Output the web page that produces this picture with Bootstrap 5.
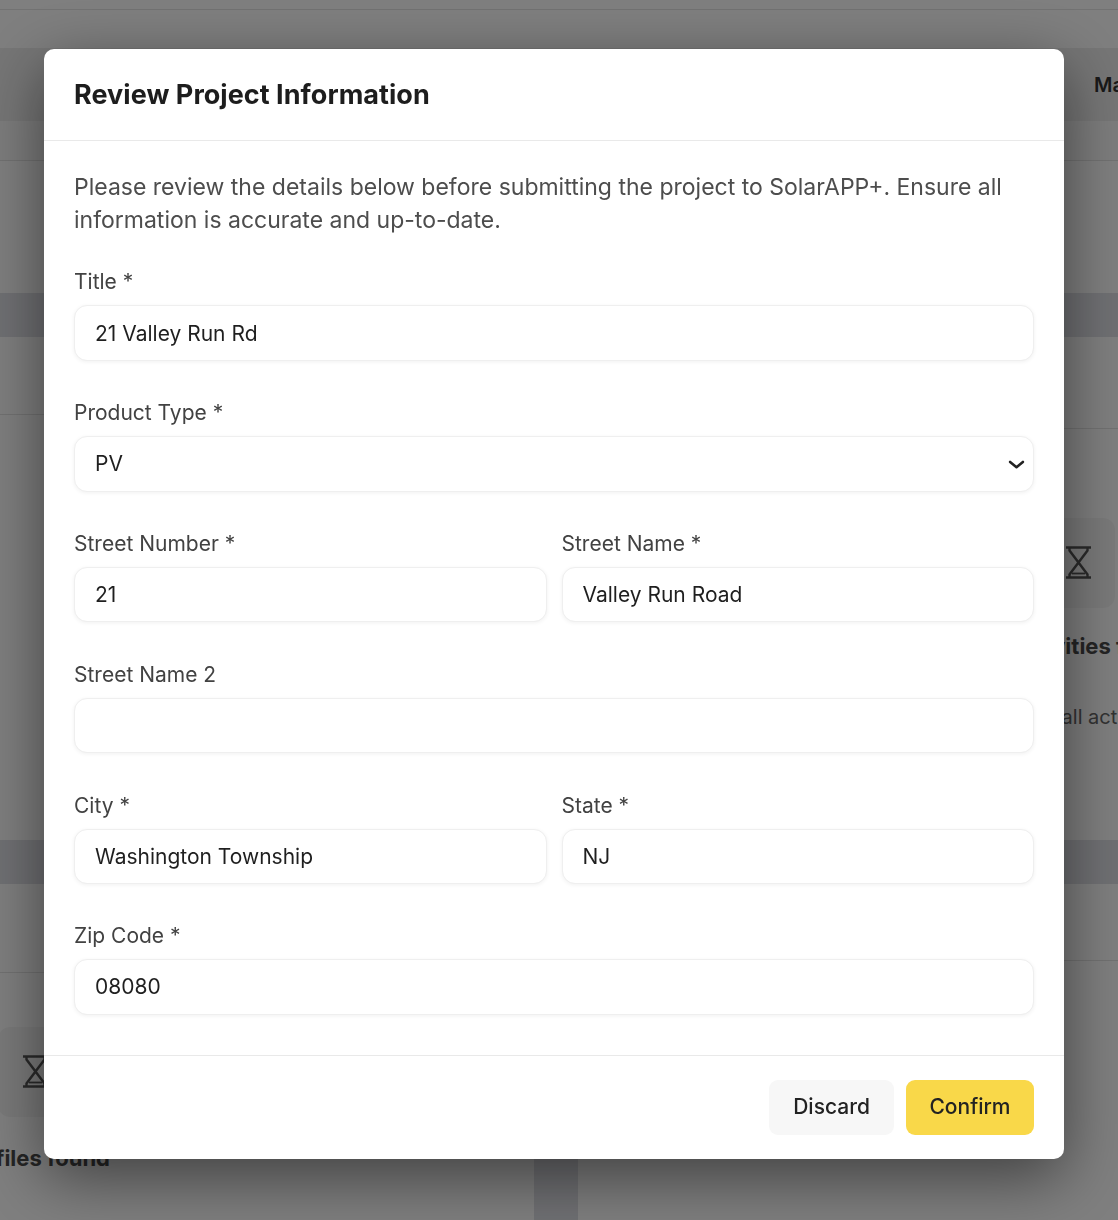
<!DOCTYPE html>
<html lang="en">
<head>
<meta charset="utf-8">
<title>Review Project Information</title>
<link rel="stylesheet" href="https://cdn.jsdelivr.net/npm/bootstrap@5.3.0/dist/css/bootstrap.min.css">
<style>
html, body { height: 1220px; overflow: hidden; }
body { font-family: Inter, "Liberation Sans", sans-serif; background: #fff; color: #1f1f1f; }
.bg-top { height: 48px; padding-top: 9px; }
.bg-topline { border-top: 1px solid #e4e4e4; }
.bg-head { height: 73px; background: #ededed; }
.bg-head-label { margin-left: 1094px; font-size: 20px; font-weight: 600; line-height: 75px; color: #333; white-space: nowrap; }
.bg-sub { height: 40px; border-bottom: 1px solid #e4e4e4; background: #fafafa; }
.bg-gap { height: 132px; }
.bg-band { height: 44px; background: #e0e1e7; }
.bg-cols { display: flex; }
.bg-cols-a { height: 503px; }
.bg-cols-b { height: 400px; }
.bg-left { width: 534px; flex: none; }
.bg-mid { width: 44px; flex: none; background: #e0e1e7; }
.bg-right { flex: 1 1 auto; min-width: 0; }
.bg-spacer-l1 { height: 78px; border-bottom: 1px solid #e4e4e4; }
.bg-spacer-r1 { height: 92px; border-bottom: 1px solid #e4e4e4; }
.bg-spacer-l2 { height: 89px; border-bottom: 1px solid #e4e4e4; }
.bg-spacer-r2 { height: 77px; border-bottom: 1px solid #e4e4e4; }
.empty-box { width: 240px; display: flex; flex-direction: column; align-items: center; white-space: nowrap; }
.empty-r { margin-left: 380px; margin-top: 89px; }
.empty-l { margin-left: -85px; margin-top: 54px; }
.empty-tile { width: 74px; height: 90px; border-radius: 12px; background: #f5f5f5; display: flex; align-items: center; justify-content: center; }
.empty-tile svg { width: 25px; height: 33px; display: block; margin-top: -2px; }
.empty-title { font-size: 22px; font-weight: 700; line-height: 30px; color: #4a4a4a; margin-top: 23px; }
.empty-l .empty-title { margin-top: 26px; }
.empty-sub { font-size: 20px; line-height: 30px; color: #666; margin-top: 41px; }

.review-dialog { max-width: 1020px; width: 1020px; margin: 49px 0 0 44px; }
.review-dialog .modal-content { border: 0; border-radius: 10px; box-shadow: 0 18px 64px rgba(0,0,0,.5); }
.review-dialog .modal-header { height: 92px; padding: 0 30px; border-bottom: 1px solid #e9e9e9; border-radius: 10px 10px 0 0; }
.review-dialog .modal-title { font-size: 27px; font-weight: 700; color: #1d1d1d; line-height: 36px; letter-spacing: .04px; }
.review-dialog .modal-body { padding: 30px 30px 0; height: 914px; flex: none; }
.intro { font-size: 23px; line-height: 33px; color: #4d4d4d; margin: 0 0 29.4px; }
.fld { margin-bottom: 36.4px; }
.fld-row { --bs-gutter-x: 15px; }
.fld-label { display: block; font-size: 21px; line-height: 31px; color: #424242; margin: 0 0 8px; }
.fld-ctl.form-control, .fld-ctl.form-select { height: 55.4px; border: 1px solid #efefef; border-radius: 13px; padding: 0 20px; font-size: 21px; color: #1f1f1f; box-shadow: 0 1px 4px rgba(0,0,0,.06); }
.fld-ctl.form-select { padding-right: 40px; background-size: 17px 17px; background-position: right 8px top 50%; background-image: url("data:image/svg+xml,%3csvg xmlns='http://www.w3.org/2000/svg' viewBox='0 0 16 16'%3e%3cpath fill='none' stroke='%23222' stroke-linecap='round' stroke-linejoin='round' stroke-width='2.4' d='M2 6.5l6 5 6-5'/%3e%3c/svg%3e"); }
.review-dialog .modal-footer { height: 104px; padding: 0 30px; border-top: 1px solid #e9e9e9; gap: 12px; border-radius: 0 0 10px 10px; }
.act { height: 55px; padding: 0 24px 2px; font-size: 21px; font-weight: 500; border: 0; border-radius: 9px; color: #222; margin: 0; }
.act-muted, .act-muted:hover { background: #f7f7f7; color: #222; }
.act-gold, .act-gold:hover { background: #f9d849; color: #222; padding-left: 23.5px; padding-right: 23.5px; }
</style>
</head>
<body>
<main>
  <div class="bg-top"><div class="bg-topline"></div></div>
  <div class="bg-head"><div class="bg-head-label">Manage</div></div>
  <div class="bg-sub"></div>
  <div class="bg-gap"></div>
  <div class="bg-band"></div>
  <div class="bg-cols bg-cols-a">
    <div class="bg-left"><div class="bg-spacer-l1"></div></div>
    <div class="bg-mid"></div>
    <div class="bg-right">
      <div class="bg-spacer-r1"></div>
      <div class="empty-box empty-r">
        <div class="empty-tile">
          <svg viewBox="0 0 25 33" fill="none" stroke="#555" stroke-width="2.4"><path d="M0 1.5h25M0 31.5h25M3.500 1.500v3L21.500 28.500v3M21.500 1.500v3L3.500 28.500v3"/><path d="M6 27.500h13" stroke-width="1.800"/></svg>
        </div>
        <div class="empty-title">No activities found</div>
        <div class="empty-sub">You can view all activities here.</div>
      </div>
    </div>
  </div>
  <div class="bg-band"></div>
  <div class="bg-cols bg-cols-b">
    <div class="bg-left">
      <div class="bg-spacer-l2"></div>
      <div class="empty-box empty-l">
        <div class="empty-tile">
          <svg viewBox="0 0 25 33" fill="none" stroke="#555" stroke-width="2.4"><path d="M0 1.5h25M0 31.5h25M3.500 1.500v3L21.500 28.500v3M21.500 1.500v3L3.500 28.500v3"/><path d="M6 27.500h13" stroke-width="1.800"/></svg>
        </div>
        <div class="empty-title">No files found</div>
      </div>
    </div>
    <div class="bg-mid"></div>
    <div class="bg-right"><div class="bg-spacer-r2"></div></div>
  </div>
</main>

<div class="modal-backdrop show"></div>
<div class="modal d-block" tabindex="-1" role="dialog" aria-modal="true">
  <div class="modal-dialog review-dialog">
    <div class="modal-content">
      <div class="modal-header">
        <h5 class="modal-title">Review Project Information</h5>
      </div>
      <div class="modal-body">
        <p class="intro">Please review the details below before submitting the project to SolarAPP+. Ensure all information is accurate and up-to-date.</p>
        <form>
          <div class="fld">
            <label class="fld-label" for="f1">Title *</label>
            <input id="f1" class="form-control fld-ctl" value="21 Valley Run Rd">
          </div>
          <div class="fld">
            <label class="fld-label" for="f2">Product Type *</label>
            <select id="f2" class="form-select fld-ctl"><option>PV</option></select>
          </div>
          <div class="row fld-row fld">
            <div class="col-6">
              <label class="fld-label" for="f3">Street Number *</label>
              <input id="f3" class="form-control fld-ctl" value="21">
            </div>
            <div class="col-6">
              <label class="fld-label" for="f4">Street Name *</label>
              <input id="f4" class="form-control fld-ctl" value="Valley Run Road">
            </div>
          </div>
          <div class="fld">
            <label class="fld-label" for="f5">Street Name 2</label>
            <input id="f5" class="form-control fld-ctl" value="">
          </div>
          <div class="row fld-row fld">
            <div class="col-6">
              <label class="fld-label" for="f6">City *</label>
              <input id="f6" class="form-control fld-ctl" value="Washington Township">
            </div>
            <div class="col-6">
              <label class="fld-label" for="f7">State *</label>
              <input id="f7" class="form-control fld-ctl" value="NJ">
            </div>
          </div>
          <div class="fld">
            <label class="fld-label" for="f8">Zip Code *</label>
            <input id="f8" class="form-control fld-ctl" value="08080">
          </div>
        </form>
      </div>
      <div class="modal-footer">
        <button type="button" class="btn act act-muted">Discard</button>
        <button type="button" class="btn act act-gold">Confirm</button>
      </div>
    </div>
  </div>
</div>
<script src="https://cdn.jsdelivr.net/npm/bootstrap@5.3.0/dist/js/bootstrap.bundle.min.js"></script>
</body>
</html>
